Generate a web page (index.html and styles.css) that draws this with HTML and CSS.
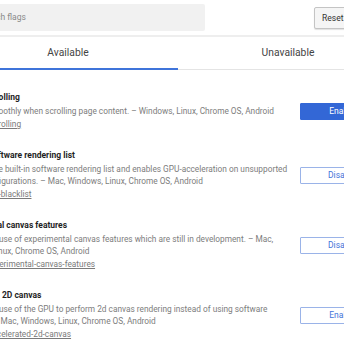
FILE: index.html
```
<!DOCTYPE html>
<html>
    <head>
        <title>Experiments</title>
        <meta charset="UTF-8">
        <link rel="stylesheet" href="styles.css">
    </head>
    <body>
        <div class='page'>
            <div id='header'>
                <div class='search'>Search flags</div>
                <button class='reset'>Reset all to default</button>
            </div>

            <div class='tabs'>
                <div class='tab selected'>Available</div>
                <div class='tab'>Unavailable</div>
            </div>

            <div class='experiments'>
                <div class='experiment'>
                    <div class='text'>
                        <div class='name'>Smooth Scrolling</div>
                        <div class='desc'>Animate smoothly when scrolling page content. – Windows, Linux, Chrome OS, Android</div>
                        <a class='permalink' href='#smooth-scrolling'>#smooth-scrolling</a>
                    </div>
                    <button class='action primary'>Enable</button>
                </div>
                <div class='experiment'>
                    <div class='text'>
                        <div class='name'>Override software rendering list</div>
                        <div class='desc'>Overrides the built-in software rendering list and enables GPU-acceleration on unsupported system configurations. – Mac, Windows, Linux, Chrome OS, Android</div>
                        <a class='permalink' href='#ignore-gpu-blacklist'>#ignore-gpu-blacklist</a>
                    </div>
                    <button class='action'>Disable</button>
                </div>
                <div class='experiment'>
                    <div class='text'>
                        <div class='name'>Experimental canvas features</div>
                        <div class='desc'>Enables the use of experimental canvas features which are still in development. – Mac, Windows, Linux, Chrome OS, Android</div>
                        <a class='permalink' href='#enable-experimental-canvas-features'>#enable-experimental-canvas-features</a>
                    </div>
                    <button class='action'>Disable</button>
                </div>
                <div class='experiment'>
                    <div class='text'>
                        <div class='name'>Accelerated 2D canvas</div>
                        <div class='desc'>Enables the use of the GPU to perform 2d canvas rendering instead of using software rendering. – Mac, Windows, Linux, Chrome OS, Android</div>
                        <a class='permalink' href='#disable-accelerated-2d-canvas'>#disable-accelerated-2d-canvas</a>
                    </div>
                    <button class='action'>Enable</button>
                </div>
            </div>
        </div>
    </body>
</html>
```
FILE: styles.css
```
body {
    margin: 0;
    overflow: hidden;
    background: #fff;
    font-family: Roboto, "Noto Sans", sans-serif;
    color: #333;
}
.page {
    margin-left: -46px;
    width: 460px;
}
#header {
    display: flex;
    align-items: center;
    height: 35px;
    border-bottom: 2px solid #eeeeee;
}
.search {
    width: 226px;
    height: 27px;
    line-height: 27px;
    padding-left: 25px;
    background: #f1f1f1;
    color: #8a8a8a;
    font-size: 8.5px;
    border-radius: 2px;
}
.reset {
    margin-left: 109px;
    height: 22px;
    padding: 0 7px;
    background: #f5f5f5;
    border: 1px solid #c4c4c4;
    border-radius: 2px;
    box-shadow: 0 1px 1px rgba(0, 0, 0, 0.12);
    font-family: Roboto, sans-serif;
    font-size: 8.5px;
    color: #333;
    white-space: nowrap;
}
.tabs {
    display: flex;
    margin-left: 4px;
    width: 440px;
    border-bottom: 1px solid #e4e4e4;
}
.tab {
    flex: 1;
    height: 31px;
    line-height: 31px;
    text-align: center;
    font-size: 10.3px;
    color: #444;
    margin-bottom: -1px;
    border-bottom: 2px solid transparent;
}
.tab.selected {
    border-bottom-color: #3f74da;
}
.experiments {
    padding-top: 12px;
}
.experiment {
    display: flex;
    align-items: center;
    padding: 8px 0;
}
.text {
    width: 336px;
}
.name {
    font-size: 8.5px;
    font-weight: bold;
    line-height: 14px;
    margin-bottom: 1px;
    color: #1f1f1f;
}
.desc {
    font-size: 8.3px;
    line-height: 12px;
    color: #7d7d7d;
}
.permalink {
    display: block;
    font-size: 8.3px;
    line-height: 15px;
    color: #7a7a7a;
}
.action {
    margin-left: 10px;
    width: 84px;
    height: 17px;
    padding: 0;
    background: #fff;
    border: 1px solid #9ab3e8;
    border-radius: 1px;
    color: #3f74da;
    font-family: Roboto, sans-serif;
    font-size: 8.5px;
}
.action.primary {
    background: #3367d6;
    border-color: #3367d6;
    color: #fff;
}
```
